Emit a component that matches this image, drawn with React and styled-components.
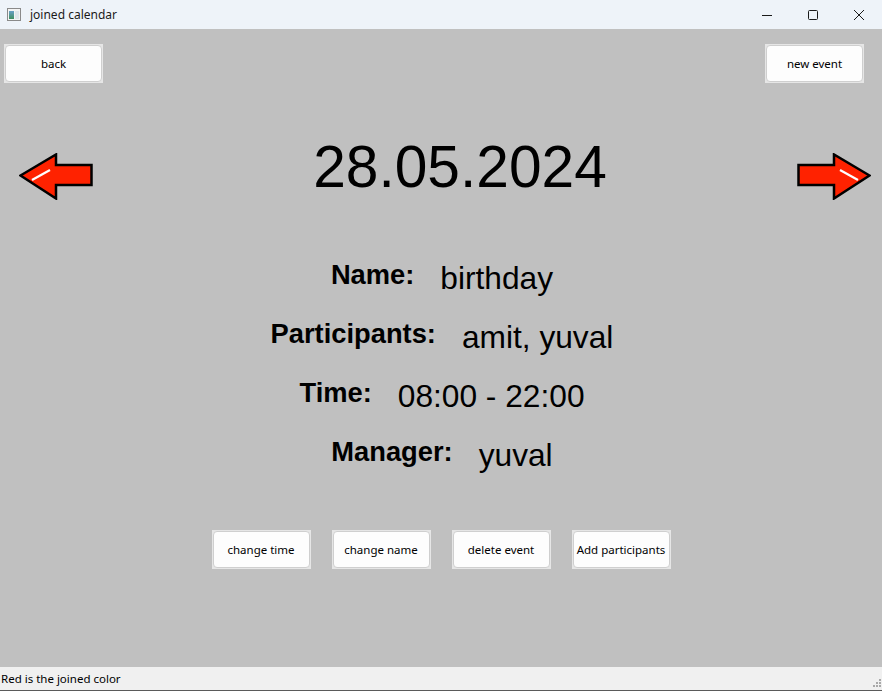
import React from "react";
import styled, { createGlobalStyle } from "styled-components";

const GlobalStyle = createGlobalStyle`
  html, body {
    margin: 0;
    padding: 0;
    width: 882px;
    height: 691px;
    overflow: hidden;
  }
  * {
    box-sizing: border-box;
  }
`;

const Window = styled.div`
  width: 882px;
  height: 691px;
  display: flex;
  flex-direction: column;
  background: #c0c0c0;
`;

const TitleBar = styled.div`
  height: 29px;
  flex-shrink: 0;
  display: flex;
  align-items: center;
  background: #eef3f9;
  font-family: "Noto Sans", "Open Sans", sans-serif;
  font-size: 12px;
  color: #1a1a1a;
`;

const AppIcon = styled.svg`
  margin-left: 7px;
  margin-right: 9px;
`;

const TitleText = styled.span`
  flex: 1;
  margin-top: -1px;
`;

const WinControls = styled.div`
  display: flex;
  height: 100%;
`;

const WinButton = styled.div`
  width: 46px;
  height: 100%;
  display: flex;
  align-items: center;
  justify-content: center;
`;

const Main = styled.div`
  flex: 1;
  display: flex;
  flex-direction: column;
  padding-top: 15px;
`;

const TopBar = styled.div`
  display: flex;
  justify-content: space-between;
  padding: 0 18px 0 4px;
`;

const ButtonFrame = styled.div`
  width: 99px;
  height: 39px;
  padding: 1px;
  background: #e6e6e6;
  display: flex;
`;

const Button = styled.button`
  flex: 1;
  margin: 0;
  padding: 0;
  border: 1px solid #cfcfcf;
  border-radius: 4px;
  background: #fdfdfd;
  font-family: "Noto Sans", "Open Sans", sans-serif;
  font-size: 11.5px;
  color: #000;
  cursor: pointer;
`;

const DateRow = styled.div`
  display: flex;
  align-items: flex-start;
  margin-top: 54px;
  height: 63px;
`;

const Arrow = styled.svg`
  flex-shrink: 0;
  margin-top: 16px;
  margin-left: ${(p) => (p.$flip ? "0" : "19px")};
  margin-right: ${(p) => (p.$flip ? "11px" : "0")};
  transform: ${(p) => (p.$flip ? "scaleX(-1)" : "none")};
`;

const DateText = styled.div`
  flex: 1;
  text-align: center;
  padding-left: 30px;
  font-family: "Liberation Sans", Arial, sans-serif;
  font-size: 58.67px;
  line-height: 60px;
  color: #000;
`;

const InfoList = styled.div`
  margin-top: 58px;
  display: flex;
  flex-direction: column;
  gap: 19px;
`;

const InfoRow = styled.div`
  display: flex;
  justify-content: center;
  align-items: flex-start;
  gap: 26px;
  height: 40px;
  padding-left: 2px;
  font-family: "Liberation Sans", Arial, sans-serif;
  color: #000;
`;

const Label = styled.span`
  font-weight: bold;
  font-size: 27.3px;
  line-height: 34px;
`;

const Value = styled.span`
  font-size: 31.7px;
  line-height: 40px;
`;

const ActionRow = styled.div`
  margin-top: 55px;
  display: flex;
  justify-content: center;
  gap: 21px;
`;

const StatusBar = styled.div`
  height: 24px;
  flex-shrink: 0;
  display: flex;
  align-items: center;
  justify-content: space-between;
  padding-left: 1px;
  background: #f0f0f0;
  border-bottom: 1px solid #5a5a5a;
  font-family: "Noto Sans", "Open Sans", sans-serif;
  font-size: 11.5px;
  color: #000;
`;

const Grip = styled.svg`
  align-self: flex-end;
  margin-right: 1px;
  margin-bottom: 1px;
`;

function ArrowShape({ flip }) {
  return (
    <Arrow $flip={flip} width="74" height="47" viewBox="0 0 74 47">
      <polygon
        points="1.5,22.5 37,1.5 37,12 72.5,12 72.5,32 37,32 37,45.5"
        fill="#ff2200"
        stroke="#000"
        strokeWidth="2.5"
        strokeLinejoin="miter"
      />
      <line x1="13" y1="27" x2="31" y2="17" stroke="#fff" strokeWidth="2.2" />
    </Arrow>
  );
}

const info = [
  ["Name:", "birthday"],
  ["Participants:", "amit, yuval"],
  ["Time:", "08:00 - 22:00"],
  ["Manager:", "yuval"],
];

const actions = ["change time", "change name", "delete event", "Add participants"];

export default function App() {
  return (
    <Window>
      <GlobalStyle />
      <TitleBar>
        <AppIcon width="14" height="13" viewBox="0 0 14 13">
          <defs>
            <linearGradient id="ig" x1="0" y1="0" x2="0" y2="1">
              <stop offset="0" stopColor="#6aa0c8" />
              <stop offset="1" stopColor="#3f8f5f" />
            </linearGradient>
          </defs>
          <rect x="0.5" y="0.5" width="13" height="12" fill="#f4f4f4" stroke="#8a8a8a" />
          <rect x="2" y="3" width="5" height="8" fill="url(#ig)" />
          <rect x="8" y="3" width="4" height="8" fill="#dfe6ea" />
        </AppIcon>
        <TitleText>joined calendar</TitleText>
        <WinControls>
          <WinButton>
            <svg width="10" height="10" viewBox="0 0 10 10">
              <line x1="0" y1="5.5" x2="10" y2="5.5" stroke="#1a1a1a" strokeWidth="1" />
            </svg>
          </WinButton>
          <WinButton>
            <svg width="10" height="10" viewBox="0 0 10 10">
              <rect x="0.5" y="0.5" width="9" height="9" rx="1" fill="none" stroke="#1a1a1a" strokeWidth="1" />
            </svg>
          </WinButton>
          <WinButton>
            <svg width="10" height="10" viewBox="0 0 10 10">
              <path d="M0 0 L10 10 M10 0 L0 10" stroke="#1a1a1a" strokeWidth="1" />
            </svg>
          </WinButton>
        </WinControls>
      </TitleBar>

      <Main>
        <TopBar>
          <ButtonFrame>
            <Button>back</Button>
          </ButtonFrame>
          <ButtonFrame>
            <Button>new event</Button>
          </ButtonFrame>
        </TopBar>

        <DateRow>
          <ArrowShape />
          <DateText>28.05.2024</DateText>
          <ArrowShape flip />
        </DateRow>

        <InfoList>
          {info.map(([label, value]) => (
            <InfoRow key={label}>
              <Label>{label}</Label>
              <Value>{value}</Value>
            </InfoRow>
          ))}
        </InfoList>

        <ActionRow>
          {actions.map((a) => (
            <ButtonFrame key={a}>
              <Button>{a}</Button>
            </ButtonFrame>
          ))}
        </ActionRow>
      </Main>

      <StatusBar>
        <span>Red is the joined color</span>
        <Grip width="10" height="10" viewBox="0 0 10 10">
          {[
            [8, 0], [8, 3], [5, 3], [8, 6], [5, 6], [2, 6],
          ].map(([x, y]) => (
            <rect key={`${x}-${y}`} x={x} y={y} width="2" height="2" fill="#a8a8a8" />
          ))}
        </Grip>
      </StatusBar>
    </Window>
  );
}
